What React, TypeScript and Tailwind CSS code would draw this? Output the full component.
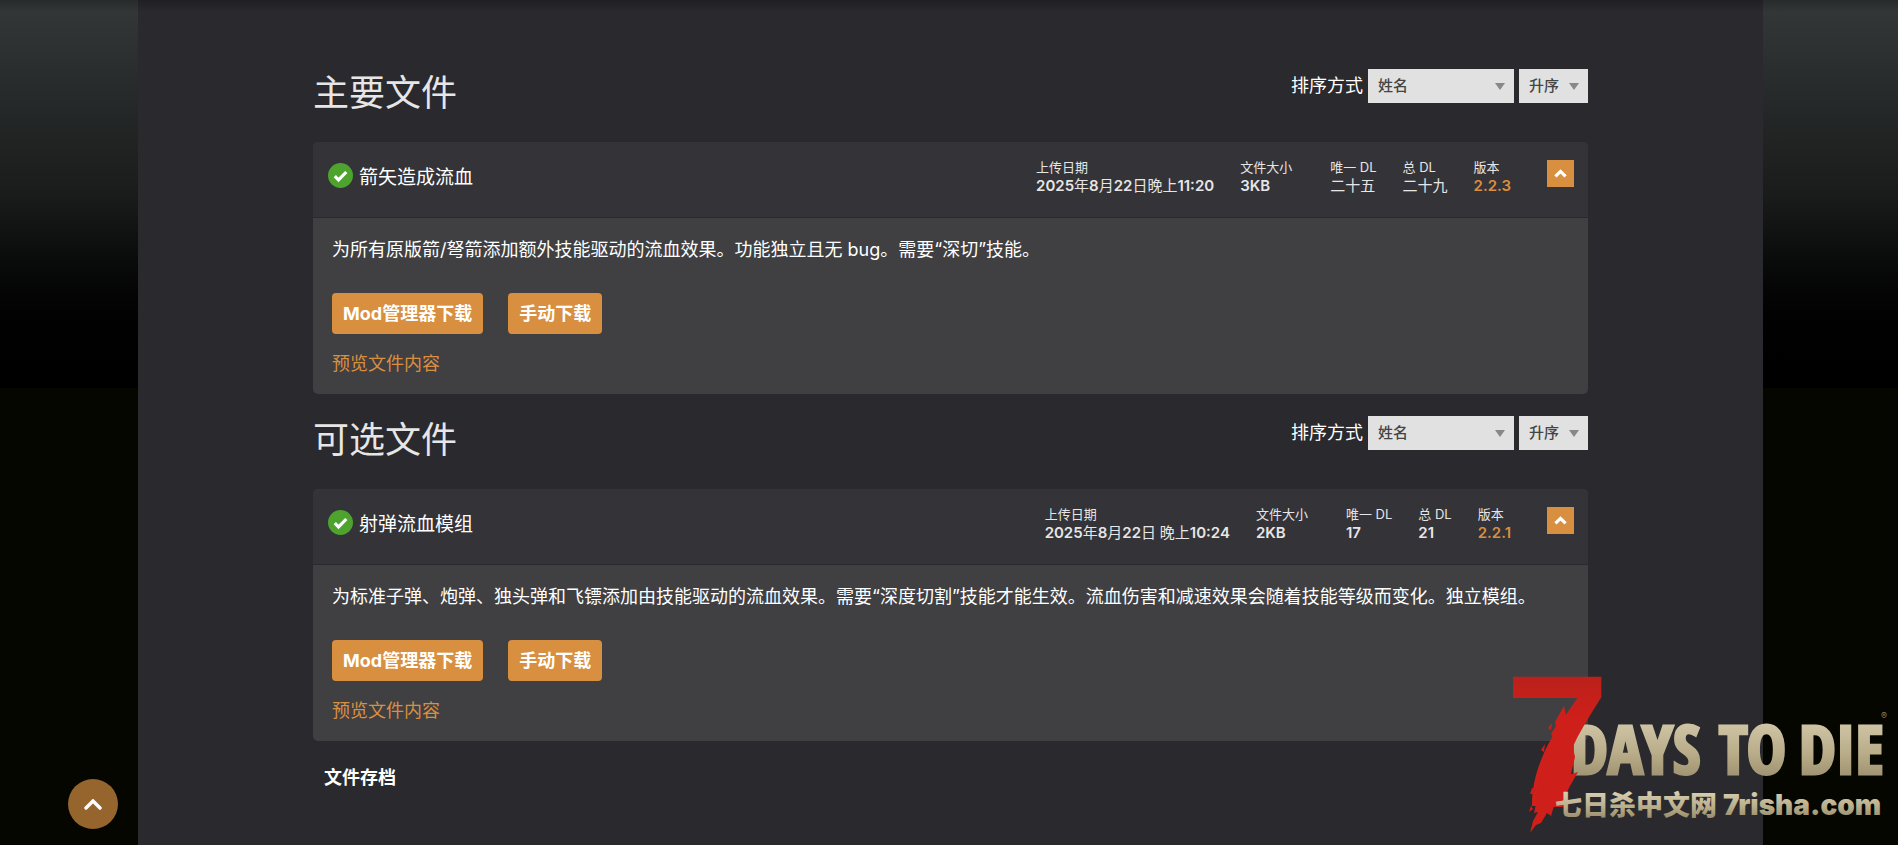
import React from "react";

type ModFile = {
  id: string;
  heading: string;
  title: string;
  date: string;
  size: string;
  unique: string;
  total: string;
  version: string;
  description: string;
};

const files: ModFile[] = [
  {
    id: "main",
    heading: "主要文件",
    title: "箭矢造成流血",
    date: "2025年8月22日晚上11:20",
    size: "3KB",
    unique: "二十五",
    total: "二十九",
    version: "2.2.3",
    description: "为所有原版箭/弩箭添加额外技能驱动的流血效果。功能独立且无 bug。需要“深切”技能。",
  },
  {
    id: "optional",
    heading: "可选文件",
    title: "射弹流血模组",
    date: "2025年8月22日 晚上10:24",
    size: "2KB",
    unique: "17",
    total: "21",
    version: "2.2.1",
    description:
      "为标准子弹、炮弹、独头弹和飞镖添加由技能驱动的流血效果。需要“深度切割”技能才能生效。流血伤害和减速效果会随着技能等级而变化。独立模组。",
  },
];

function Select({ id, label, options, className }: { id: string; label: string; options: string[]; className: string }) {
  return (
    <span className={"relative block " + className}>
      <select
        id={id}
        aria-label={label}
        className="block h-[34px] w-full appearance-none bg-[#e1e1e1] pr-6 pl-[10px] text-[15px] font-medium text-[#444]"
      >
        {options.map((o) => (
          <option key={o}>{o}</option>
        ))}
      </select>
      <svg className="pointer-events-none absolute top-[14px] right-[9px] h-[7px] w-[10px]" viewBox="0 0 10 7" aria-hidden="true">
        <path d="M0 0h10L5 7z" fill="#888" />
      </svg>
    </span>
  );
}

function Stat({ label, value, className = "", accent = false }: { label: string; value: string; className?: string; accent?: boolean }) {
  // Digits and Latin are semibold, Chinese characters stay regular.
  const runs = value.split(/([\u4e00-\u9fff]+)/);
  return (
    <div className={"whitespace-nowrap " + className}>
      <dt className="text-[13px] leading-[18px] text-[#e6e6e6]">{label}</dt>
      <dd className={"text-[15px] leading-[19px] " + (accent ? "text-[#d98f40]" : "text-[#e6e6e6]")}>
        {runs.map((run, i) => (
          <span key={i} className={i % 2 ? "font-normal" : "font-semibold"}>
            {run}
          </span>
        ))}
      </dd>
    </div>
  );
}

function FileSection({ file }: { file: ModFile }) {
  return (
    <section>
      <div className="flex h-[95px] items-start justify-between pt-[22px]">
        <h2 className="text-[36px] leading-[48px] font-normal text-[#e6e6e6]">{file.heading}</h2>
        <div className="flex items-center gap-[5px]">
          <label htmlFor={file.id + "-sort"} className="text-[18px] leading-[30px] text-white">
            排序方式
          </label>
          <Select id={file.id + "-sort"} label="排序方式" options={["姓名", "日期"]} className="w-[146px]" />
          <Select id={file.id + "-order"} label="顺序" options={["升序", "降序"]} className="w-[69px]" />
        </div>
      </div>

      <article className="overflow-hidden rounded-[5px] bg-[#404043]">
        <header className="flex h-[76px] items-start border-b border-[#29292e] bg-[#343337] pr-[14px] pl-[15px]">
          <div className="mt-[21px] flex grow items-start gap-[6px]">
            <svg className="h-[25px] w-[25px]" viewBox="0 0 25 25" aria-hidden="true">
              <circle cx="12.5" cy="12.5" r="12.5" fill="#4da32d" />
              <path d="M6.8 13.2l3.7 3.7 7.8-7.9" fill="none" stroke="#fff" strokeWidth="3.2" />
            </svg>
            <h3 className="text-[19px] leading-[30px] text-white">{file.title}</h3>
          </div>
          <dl className="mt-4 flex gap-[26px]">
            <Stat label="上传日期" value={file.date} />
            <Stat label="文件大小" value={file.size} className="w-[64px]" />
            <Stat label="唯一 DL" value={file.unique} />
            <Stat label="总 DL" value={file.total} />
            <Stat label="版本" value={file.version} accent />
          </dl>
          <button type="button" aria-label="收起" className="mt-[18px] ml-9 flex h-[27px] w-[27px] items-center justify-center bg-[#d98f40]">
            <svg className="h-[9px] w-[13px]" viewBox="0 0 13 9" aria-hidden="true">
              <path d="M1.4 7.4l5.1-5 5.1 5" fill="none" stroke="#fff" strokeWidth="3.2" />
            </svg>
          </button>
        </header>
        <div className="px-[19px] pt-[18px] pb-4">
          <p className="text-[18px] leading-[28px] text-white">{file.description}</p>
          <div className="mt-[29px] flex gap-[25px]">
            <button type="button" className="h-[41px] rounded-[4px] bg-[#d98f40] px-[11px] text-[18px] font-bold text-white">
              Mod管理器下载
            </button>
            <button type="button" className="h-[41px] rounded-[4px] bg-[#d98f40] px-[11px] text-[18px] font-bold text-white">
              手动下载
            </button>
          </div>
          <a href="#preview" className="mt-[15px] block w-fit text-[18px] leading-[29px] text-[#d98f40]">
            预览文件内容
          </a>
        </div>
      </article>
    </section>
  );
}

function SiteLogo() {
  return (
    <svg
      className="pointer-events-none absolute right-0 bottom-0 h-[185px] w-[400px]"
      viewBox="0 0 400 185"
      role="img"
      aria-label="7 Days to Die"
    >
      <defs>
        <linearGradient id="bone" x1="0" y1="0" x2="0" y2="1">
          <stop offset="0" stopColor="#ded5b8" />
          <stop offset="0.55" stopColor="#b9ad8a" />
          <stop offset="1" stopColor="#8d8160" />
        </linearGradient>
        <linearGradient id="blood" x1="0" y1="0" x2="0" y2="1">
          <stop offset="0" stopColor="#a8221c" />
          <stop offset="0.4" stopColor="#cf1f1a" />
          <stop offset="1" stopColor="#d41f1b" />
        </linearGradient>
      </defs>
      <g
        fill="url(#bone)"
        stroke="url(#bone)"
        strokeWidth="3"
        style={{ fontFamily: '"Noto Sans ExtraCondensed", "Open Sans Condensed", "Roboto Condensed", "Liberation Sans", sans-serif' }}
        className="text-[66px] font-bold"
      >
        <text x="73" y="114">DAYS</text>
        <text x="221" y="114">TO</text>
        <text x="301" y="114">DIE</text>
      </g>
      <text x="383" y="59" fill="#8d8160" className="text-[9px]">®</text>
      <text
        x="7"
        y="146"
        fill="url(#blood)"
        style={{ fontFamily: '"Liberation Sans", sans-serif' }}
        className="text-[188px] font-bold"
      >
        7
      </text>
      {/* Brush bristles trailing off the stem */}
      <g fill="#cf1f1a">
        <path d="M66 46l-9 16 1 4-5 8 2 3-7 12 2 3-7 13 2 4-6 11 3 1-5 14 8 12h20l12-50z" />
        <path d="M80 112l-8 14-4 8-5-1-7 13-3 10-4-3-6 10-5 2-6 8 3-12 5-9-4 1 2-9 5-8-2-4 6-10z" />
        <path d="M34 128l4 1-2 5-4 0z M50 68l4-5-1 7z M43 90l4-6-1 8z M31 152l2-6 2 3z" />
      </g>
      <g fill="url(#bone)" className="font-black">
        <text x="57" y="155" className="text-[27px]">七日杀中文网</text>
        <text x="225" y="155" className="text-[28px]">7risha.com</text>
      </g>
    </svg>
  );
}

export default function App() {
  return (
    <div className="relative min-h-screen bg-[#050600] pr-[135px] pl-[138px] font-['Inter','Noto_Sans_CJK_SC',sans-serif]">
      <div className="absolute inset-x-0 top-0 h-[388px] bg-linear-to-b from-[#343839] via-[#1a1c1b] to-black" />
      <main className="relative min-h-screen bg-[#2a292e] px-[175px] pt-[47px] pb-12">
        <FileSection file={files[0]} />
        <FileSection file={files[1]} />
        <h2 className="mt-[23px] ml-[11px] text-[18px] leading-[28px] font-bold text-white">文件存档</h2>
      </main>
      <div className="absolute inset-x-0 top-0 h-3 bg-linear-to-b from-black/25 to-transparent" />
      <a
        href="#top"
        aria-label="返回顶部"
        className="fixed bottom-4 left-[68px] flex h-[50px] w-[50px] items-center justify-center rounded-full bg-[#96652d]"
      >
        <svg className="h-[11px] w-[18px]" viewBox="0 0 18 11" aria-hidden="true">
          <path d="M2 9l7-7 7 7" fill="none" stroke="#fff" strokeWidth="3.4" strokeLinecap="round" />
        </svg>
      </a>
      <SiteLogo />
    </div>
  );
}
